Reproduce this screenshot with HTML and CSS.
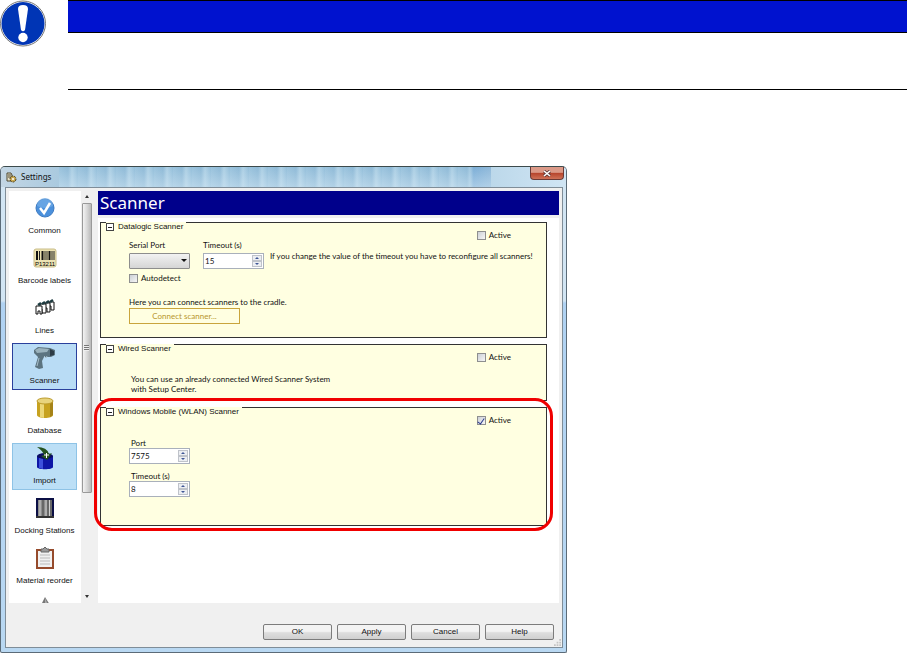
FILE: index.html
```
<!DOCTYPE html>
<html lang="en">
<head>
    <meta charset="UTF-8">
    <meta name="viewport" content="width=device-width, initial-scale=1.0">
    <title>Settings - Scanner</title>
    <link rel="stylesheet" href="styles.css">
</head>
<body>
    <!-- Notice -->
    <div class="notice">
        <svg class="notice-icon" viewBox="0 0 47 47" aria-hidden="true">
            <circle cx="23" cy="23.500" r="22.500" fill="#fff" stroke="#777" stroke-width="1"/>
            <circle cx="23" cy="23.500" r="21.500" fill="#0035b5"/>
            <path d="M18 9 Q18 5 23 5 Q28 5 28 9 L25 30 Q23 32.500 21 30 Z" fill="#fff"/>
            <circle cx="23" cy="37.500" r="4.700" fill="#fff"/>
        </svg>
        <div class="notice-body">
            <div class="notice-bar"></div>
        </div>
    </div>

    <!-- Settings window -->
    <div class="window">
        <div class="titlebar">
            <svg class="app-icon" viewBox="0 0 11 11" aria-hidden="true">
                <path d="M1 1h4l1 2v6H1z" fill="#e9e3c9" stroke="#4c4630"/>
                <path d="M2 3h3M2 5h3" stroke="#4c4630"/>
                <circle cx="7" cy="7" r="3" fill="#c9a950" stroke="#4c4020" stroke-dasharray="2 1"/>
                <circle cx="7" cy="7" r="1" fill="#fff"/>
            </svg>
            <span class="window-title">Settings</span>
            <div class="glass"></div>
            <button class="close" aria-label="Close">
                <svg viewBox="0 0 8 7" aria-hidden="true">
                    <path d="M1 1l6 5M7 1l-6 5" stroke="#5b3535" stroke-width="3"/>
                    <path d="M1 1l6 5M7 1l-6 5" stroke="#fff" stroke-width="1.600"/>
                </svg>
            </button>
        </div>

        <div class="client">
            <div class="content">
                <nav class="sidebar">
                    <button class="nav-item">
                        <svg viewBox="0 0 24 24" aria-hidden="true">
                            <circle cx="12" cy="12" r="9" fill="#4a90dc" stroke="#3c79c0"/>
                            <path d="M4 10a8 8 0 0 1 16 0q-8 4-16 0" fill="#79b2ea" opacity=".6"/>
                            <path d="M7 12l4 5 6-10" fill="none" stroke="#fff" stroke-width="2.500"/>
                        </svg>
                        <span>Common</span>
                    </button>
                    <button class="nav-item">
                        <svg viewBox="0 0 24 24" aria-hidden="true">
                            <rect x="1" y="3" width="22" height="18" rx="2" fill="#ece2b2" stroke="#c9bd88"/>
                            <path d="M4 5v9M9.500 5v9M16.500 5v9" stroke="#111" stroke-width="2"/>
                            <path d="M6.500 5v9M12 5v9M14 5v9M19 5v9M21 5v9" stroke="#222" stroke-width="1"/>
                            <text class="barcode-text" x="12" y="20" text-anchor="middle">P13211</text>
                        </svg>
                        <span>Barcode labels</span>
                    </button>
                    <button class="nav-item">
                        <svg viewBox="0 0 24 24" aria-hidden="true">
                            <g fill="#fff" stroke="#111">
                                <path d="M16 6h5v8h-3v-4h-2z"/>
                                <path d="M12 7h5v9h-3v-4h-2z"/>
                                <path d="M7 8h6v9h-4v-4H7z"/>
                                <path d="M3 10h6v8H7v-3H5v3H3z"/>
                            </g>
                            <path d="M5 9l3-2M9 8l3-2M13 7l3-2M17 6l3-2" stroke="#1d3b40" stroke-width="2.500"/>
                        </svg>
                        <span>Lines</span>
                    </button>
                    <button class="nav-item selected">
                        <svg viewBox="0 0 24 24" aria-hidden="true">
                            <path d="M1 4l4-3 12 1 5 2v5l-4 2-7 0-2 4 1 7-4 1-4-2 3-10-4-4z" fill="#5c7480"/>
                            <path d="M2 4l4-2 10 1-2 3-10 1z" fill="#9bb3bd"/>
                            <path d="M17 3l4 2v4l-4 1z" fill="#2c3b45"/>
                            <path d="M6 12l-2 8M11 10l2 2 1-2" stroke="#a7bfcb" fill="none"/>
                        </svg>
                        <span>Scanner</span>
                    </button>
                    <button class="nav-item">
                        <svg viewBox="0 0 24 24" aria-hidden="true">
                            <path d="M4 5v14c0 4 16 4 16 0V5z" fill="#c7a21f"/>
                            <path d="M7 7v14l4 1V7z" fill="#ecd777"/>
                            <path d="M17 7v14l3-2V5z" fill="#a58318"/>
                            <ellipse cx="12" cy="5" rx="8" ry="3" fill="#e8d47d" stroke="#bd9c2c" stroke-width="1"/>
                        </svg>
                        <span>Database</span>
                    </button>
                    <button class="nav-item hot">
                        <svg viewBox="0 0 24 24" aria-hidden="true">
                            <path d="M4 10v11c0 3 16 3 16 0V10z" fill="#0d16a6"/>
                            <path d="M6 12v10l4 1V12z" fill="#3c50dc"/>
                            <ellipse cx="12" cy="10" rx="8" ry="3" fill="#0a0d63"/>
                            <path d="M4 1q10 0 12 7l3-1-5 7-6-4 3-1q-1-4-7-8z" fill="#24521f"/>
                            <path d="M11 9h5M13.500 7v5" stroke="#fff"/>
                        </svg>
                        <span>Import</span>
                    </button>
                    <button class="nav-item">
                        <svg viewBox="0 0 24 24" aria-hidden="true">
                            <rect x="4" y="3" width="16" height="18" fill="#8c8c8c" stroke="#0b0f45" stroke-width="2"/>
                            <path d="M7 4v16M13 4v16M16.500 4v16" stroke="#d0d0d0"/>
                            <path d="M10 4v16M15 4v16M18 4v16" stroke="#444"/>
                            <path d="M3 21h18" stroke="#333" stroke-width="2"/>
                        </svg>
                        <span>Docking Stations</span>
                    </button>
                    <button class="nav-item">
                        <svg viewBox="0 0 24 24" aria-hidden="true">
                            <rect x="4" y="4" width="16" height="18" fill="#f1f1f1" stroke="#964b2c" stroke-width="2"/>
                            <path d="M7 9h10M7 12h10M7 15h10M7 18h10" stroke="#bbb"/>
                            <path d="M8 6V3h2l2-2 2 2h2v3z" fill="#999" stroke="#666" stroke-width="1"/>
                        </svg>
                        <span>Material reorder</span>
                    </button>
                    <button class="nav-item" aria-label="More">
                        <svg viewBox="0 0 24 24" aria-hidden="true">
                            <path d="M12 1l5 8H8z" fill="#777"/>
                            <path d="M12 2v7h3z" fill="#aaa"/>
                        </svg>
                    </button>
                </nav>

                <div class="scrollbar">
                    <span class="arrow up"></span>
                    <div class="thumb"><span class="grip"></span></div>
                    <span class="arrow down"></span>
                </div>

                <main class="page">
                    <h1>Scanner</h1>

                    <div class="panels">
                        <section class="panel">
                            <h2><button class="toggle" aria-label="Collapse"></button>Datalogic Scanner</h2>
                            <label class="check active-check"><input type="checkbox">Active</label>
                            <div class="fields">
                                <div class="field">
                                    <label for="serialPort">Serial Port</label>
                                    <div class="select-box">
                                        <select id="serialPort"><option></option></select>
                                    </div>
                                </div>
                                <div class="field">
                                    <label for="timeout">Timeout (s)</label>
                                    <div class="spinner">
                                        <input type="text" id="timeout" value="15">
                                        <div class="spin-buttons">
                                            <button class="spin-up" aria-label="Up"></button>
                                            <button class="spin-down" aria-label="Down"></button>
                                        </div>
                                    </div>
                                </div>
                                <p class="hint">If you change the value of the timeout you have to reconfigure all scanners!</p>
                            </div>
                            <label class="check autodetect"><input type="checkbox">Autodetect</label>
                            <p class="connect-text">Here you can connect scanners to the cradle.</p>
                            <button class="connect">Connect scanner...</button>
                        </section>

                        <section class="panel">
                            <h2><button class="toggle" aria-label="Collapse"></button>Wired Scanner</h2>
                            <label class="check active-check"><input type="checkbox">Active</label>
                            <p class="wired-text">You can use an already connected Wired Scanner System<br>with Setup Center.</p>
                        </section>

                        <section class="panel highlighted">
                            <h2><button class="toggle" aria-label="Collapse"></button>Windows Mobile (WLAN) Scanner</h2>
                            <label class="check active-check"><input type="checkbox" checked>Active</label>
                            <div class="fields stacked">
                                <div class="field">
                                    <label for="port">Port</label>
                                    <div class="spinner">
                                        <input type="text" id="port" value="7575">
                                        <div class="spin-buttons">
                                            <button class="spin-up" aria-label="Up"></button>
                                            <button class="spin-down" aria-label="Down"></button>
                                        </div>
                                    </div>
                                </div>
                                <div class="field">
                                    <label for="wlanTimeout">Timeout (s)</label>
                                    <div class="spinner">
                                        <input type="text" id="wlanTimeout" value="8">
                                        <div class="spin-buttons">
                                            <button class="spin-up" aria-label="Up"></button>
                                            <button class="spin-down" aria-label="Down"></button>
                                        </div>
                                    </div>
                                </div>
                            </div>
                        </section>
                    </div>
                </main>
            </div>

            <div class="actions">
                <button>OK</button>
                <button>Apply</button>
                <button>Cancel</button>
                <button>Help</button>
            </div>
            <svg class="resize-grip" viewBox="0 0 8 8" aria-hidden="true">
                <path d="M6 0h2v2H6zM3 3h2v2H3zM6 3h2v2H6zM0 6h2v2H0zM3 6h2v2H3zM6 6h2v2H6z" fill="#c4c4c4"/>
            </svg>
        </div>
    </div>
</body>
</html>
```
FILE: styles.css
```
* {
    box-sizing: border-box;
}
body {
    margin: 0;
    background-color: #fff;
    color: #111;
    font-family: Lato, "Noto Sans", sans-serif;
    font-size: 8px;
    line-height: 10px;
}
button, input, select {
    font: inherit;
    color: inherit;
    margin: 0;
    padding: 0;
}
h1, h2, p {
    margin: 0;
    font-size: 8px;
    font-weight: normal;
}

/* Notice */
.notice {
    display: flex;
    gap: 21px;
    margin-bottom: 76px;
}
.notice-icon {
    width: 47px;
    height: 47px;
    flex: none;
}
.notice-body {
    flex: 1;
    height: 90px;
    border-bottom: 1px solid #000;
}
.notice-bar {
    height: 33px;
    background-color: #0012cf;
    border-top: 1px solid #000;
    border-bottom: 1px solid #000;
}

/* Window frame */
.window {
    max-width: 567px;
    padding: 0 3px 4px 4px;
    border: 1px solid #5b6b78;
    border-top-color: #3c4a4c;
    border-radius: 5px 5px 2px 2px;
    background: linear-gradient(#d2e5f3 0, #d2e5f3 134px, #b0d2f2 136px, #b9d8f2 100%);
}
.titlebar {
    display: flex;
    height: 20px;
    margin: 0 -3px 0 -4px;
    padding-left: 5px;
    align-items: center;
    border-radius: 4px 4px 0 0;
    background: linear-gradient(90deg, #c3d6e4, #a9c9df 60px, #bcd8ea 490px, #d0e5f4);
}
.app-icon {
    width: 11px;
    height: 11px;
}
.window-title {
    margin-left: 4px;
    font-family: "Noto Sans", sans-serif;
}
.glass {
    flex: 1;
    align-self: stretch;
    margin: 0 39px 0 8px;
    background:
        linear-gradient(rgba(255, 255, 255, 0.1), rgba(225, 240, 250, 0.5)),
        linear-gradient(90deg, transparent 95%, #6ea5d2 96%, #83b1d5 100%),
        repeating-linear-gradient(90deg, #8fbcd9 0, #82b2d2 9px, #a5cbe2 13px, #86b6d5 19px);
}
.close {
    display: flex;
    align-self: flex-start;
    align-items: center;
    justify-content: center;
    width: 34px;
    height: 13px;
    margin-right: 2px;
    border: 1px solid #6b3a36;
    border-top: none;
    border-radius: 0 0 4px 4px;
    background: linear-gradient(#dc9a88 45%, #b6432b 50%, #cf7157);
}
.close svg {
    width: 8px;
    height: 7px;
}
.client {
    position: relative;
    height: 461px;
    padding: 3px 3px 8px;
    border: 1px solid #7f8d98;
    background-color: #f0f0f0;
}
.content {
    display: flex;
    height: 412px;
}

/* Sidebar */
.sidebar {
    display: flex;
    flex-direction: column;
    flex: none;
    gap: 3px;
    width: 72px;
    padding: 2px 4px 0 3px;
    overflow: hidden;
    background-color: #fff;
    font-family: "Liberation Sans", Arial, sans-serif;
}
.nav-item {
    display: flex;
    flex: none;
    flex-direction: column;
    align-items: center;
    gap: 6px;
    height: 47px;
    padding-top: 2px;
    border: 1px solid transparent;
    background: none;
    white-space: nowrap;
}
.nav-item svg {
    width: 24px;
    height: 24px;
    flex: none;
}
.nav-item.selected {
    background-color: #b9dcf5;
    border-color: #2a409c;
}
.nav-item.hot {
    background-color: #bcdff6;
    border-color: #8ec3e6;
}
.barcode-text {
    font-size: 6px;
}
.scrollbar {
    display: flex;
    flex: none;
    flex-direction: column;
    align-items: center;
    width: 11px;
    margin-right: 6px;
    background-color: #f0f0f0;
}
.arrow {
    width: 0;
    height: 0;
    border: 2px solid transparent;
}
.arrow.up {
    margin: 4px 0 5px;
    border-top: none;
    border-bottom: 3px solid #333;
}
.arrow.down {
    margin: auto 0 5px;
    border-bottom: none;
    border-top: 3px solid #333;
}
.thumb {
    display: flex;
    width: 10px;
    height: 290px;
    align-items: center;
    justify-content: center;
    border: 1px solid #999;
    border-radius: 1px;
    background: linear-gradient(90deg, #f3f3f3, #d8d8d8 50%, #b9b9b9);
}
.grip {
    width: 5px;
    height: 6px;
    background: repeating-linear-gradient(#777 0, #777 1px, #eee 1px, #eee 2px);
}

/* Page */
.page {
    flex: 1;
    min-width: 0;
    background-color: #fff;
}
h1 {
    height: 24px;
    padding-left: 2px;
    background-color: #00008b;
    color: #fff;
    font-family: "Noto Sans", sans-serif;
    font-size: 17px;
    line-height: 24px;
}
.panels {
    display: flex;
    flex-direction: column;
    gap: 6px;
    padding: 4px 12px 0 2px;
    border-top: 3px solid #f0f0f0;
}
.panel {
    display: flex;
    flex-direction: column;
    align-items: flex-start;
    padding: 0 26px 13px 28px;
    border: 1px solid #333;
    background-color: #ffffe1;
}
h2 {
    display: flex;
    align-items: center;
    gap: 4px;
    margin: -1px 0 0 -23px;
    padding-right: 3px;
    background-color: #ffffe1;
    font-family: "Liberation Sans", Arial, sans-serif;
}
.toggle {
    display: flex;
    width: 8px;
    height: 8px;
    align-items: center;
    justify-content: center;
    border: 1px solid #444;
    background-color: #fff;
}
.toggle::before {
    content: '';
    width: 4px;
    height: 1px;
    background-color: #222;
}
.check {
    display: flex;
    align-items: center;
    gap: 3px;
}
.check input {
    appearance: none;
    display: flex;
    width: 9px;
    height: 9px;
    align-items: center;
    justify-content: center;
    border: 1px solid #8e8f8f;
    background: linear-gradient(135deg, #ccd0d6, #f6f6f6);
}
.check input:checked::before {
    content: '';
    width: 3px;
    height: 6px;
    border: solid #26368a;
    border-width: 0 1px 1px 0;
    transform: rotate(35deg);
}
.active-check {
    align-self: flex-end;
    margin: -2px 9px 0 0;
}
.fields {
    display: flex;
    gap: 13px;
}
.field {
    display: flex;
    flex-direction: column;
    gap: 3px;
}
.select-box {
    position: relative;
}
.select-box::after {
    content: '';
    position: absolute;
    top: 6px;
    right: 3px;
    border: 3px solid transparent;
    border-top-color: #111;
    border-bottom: none;
    pointer-events: none;
}
select {
    appearance: none;
    display: block;
    width: 61px;
    height: 16px;
    border: 1px solid #8d8d8d;
    border-radius: 1px;
    background: linear-gradient(#f2f2f2, #d5d5d5);
}
.spinner {
    display: flex;
    width: 61px;
    height: 16px;
    padding: 1px;
    border: 1px solid #a9b0bb;
    background-color: #fff;
}
.spinner input {
    flex: 1;
    min-width: 0;
    border: none;
    background: none;
}
.spin-buttons {
    display: flex;
    flex-direction: column;
    width: 10px;
}
.spin-buttons button {
    display: flex;
    flex: 1;
    align-items: center;
    justify-content: center;
    border: 1px solid #bfc3ca;
    background-color: #eceef2;
}
.spin-buttons button::before {
    content: '';
    border: 2px solid transparent;
}
.spin-buttons .spin-up::before {
    border-top: none;
    border-bottom-color: #3f5695;
}
.spin-buttons .spin-down::before {
    border-bottom: none;
    border-top-color: #3f5695;
}
.hint {
    margin-left: -7px;
    padding-top: 11px;
    white-space: nowrap;
}
.autodetect {
    margin-top: 4px;
}
.connect-text {
    margin-top: 14px;
}
.connect {
    width: 111px;
    height: 16px;
    margin-top: 1px;
    border: 1px solid #c9a53c;
    background: none;
    color: #b8962e;
}
.wired-text {
    margin-top: 12px;
    padding-left: 2px;
}
.panel:nth-child(2) {
    padding-bottom: 6px;
}
.stacked {
    flex-direction: column;
    gap: 7px;
    padding-top: 13px;
}
.stacked .field {
    gap: 0;
}
.stacked .field label {
    padding-left: 2px;
}
.panel:last-child {
    padding-bottom: 28px;
}
.highlighted {
    position: relative;
}
.highlighted::after {
    content: '';
    position: absolute;
    inset: -10px -7px -6px -7px;
    border: 3px solid #f00000;
    border-radius: 18px;
    pointer-events: none;
}

/* Bottom buttons */
.actions {
    display: flex;
    justify-content: flex-end;
    gap: 5px;
    margin-top: 21px;
    padding-right: 5px;
    font-family: "Liberation Sans", Arial, sans-serif;
}
.actions button {
    width: 69px;
    height: 16px;
    border: 1px solid #7c7c7c;
    border-radius: 2px;
    background: linear-gradient(#f3f3f3 45%, #dedede 55%, #d0d0d0);
}
.resize-grip {
    position: absolute;
    right: 1px;
    bottom: 1px;
    width: 7px;
    height: 7px;
}
```
